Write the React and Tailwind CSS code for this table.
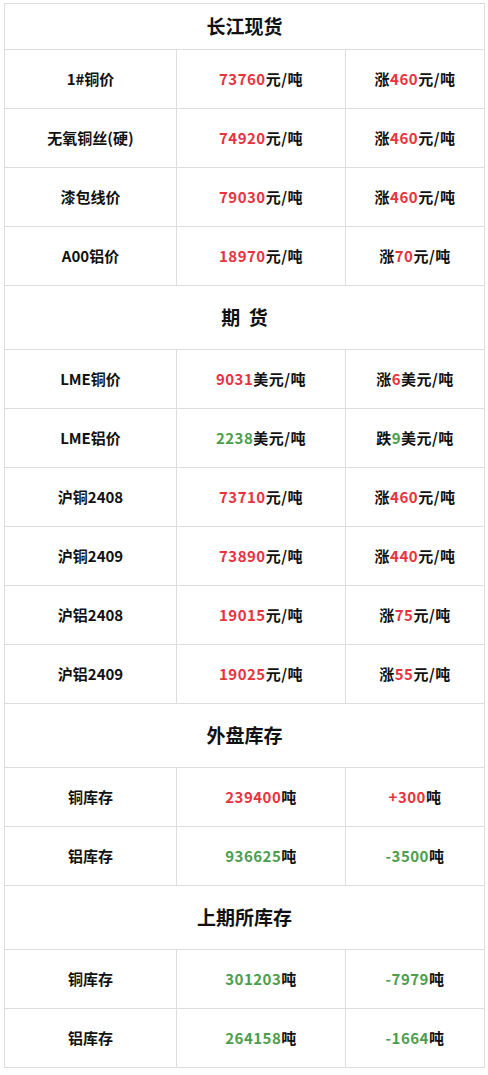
import React from 'react';

const RED = 'text-[#e8333f]';
const GREEN = 'text-[#4a9e4c]';

const sections = [
  {
    title: '长江现货',
    first: true,
    rows: [
      { name: '1#铜价', price: '73760', unit: '元/吨', dir: '涨', change: '460', color: 'red' },
      { name: '无氧铜丝(硬)', price: '74920', unit: '元/吨', dir: '涨', change: '460', color: 'red' },
      { name: '漆包线价', price: '79030', unit: '元/吨', dir: '涨', change: '460', color: 'red' },
      { name: 'A00铝价', price: '18970', unit: '元/吨', dir: '涨', change: '70', color: 'red' },
    ],
  },
  {
    title: '期\u00a0\u00a0货',
    rows: [
      { name: 'LME铜价', price: '9031', unit: '美元/吨', dir: '涨', change: '6', color: 'red' },
      { name: 'LME铝价', price: '2238', unit: '美元/吨', dir: '跌', change: '9', color: 'green' },
      { name: '沪铜2408', price: '73710', unit: '元/吨', dir: '涨', change: '460', color: 'red' },
      { name: '沪铜2409', price: '73890', unit: '元/吨', dir: '涨', change: '440', color: 'red' },
      { name: '沪铝2408', price: '19015', unit: '元/吨', dir: '涨', change: '75', color: 'red' },
      { name: '沪铝2409', price: '19025', unit: '元/吨', dir: '涨', change: '55', color: 'red' },
    ],
  },
  {
    title: '外盘库存',
    rows: [
      { name: '铜库存', price: '239400', unit: '吨', dir: '', change: '+300', color: 'red' },
      { name: '铝库存', price: '936625', unit: '吨', dir: '', change: '-3500', color: 'green' },
    ],
  },
  {
    title: '上期所库存',
    rows: [
      { name: '铜库存', price: '301203', unit: '吨', dir: '', change: '-7979', color: 'green' },
      { name: '铝库存', price: '264158', unit: '吨', dir: '', change: '-1664', color: 'green' },
    ],
  },
];

const cell = 'border border-[#dddddd] text-center align-middle';

const App = () => {
  return (
    <div
      className="bg-white pl-[4px] pt-[3px] pb-[6px] text-[#111111]"
      style={{ fontFamily: '"Noto Sans CJK SC", "Noto Sans", sans-serif' }}
    >
      <table className="w-[480px] border-collapse table-fixed">
        <colgroup>
          <col className="w-[172px]" />
          <col className="w-[169px]" />
          <col className="w-[139px]" />
        </colgroup>
        <tbody>
          {sections.map((sec) => (
            <React.Fragment key={sec.title}>
              <tr className={sec.first ? 'h-[46px]' : 'h-[64px]'}>
                <td colSpan={3} className={`${cell} text-[19px] font-bold`}>
                  {sec.title}
                </td>
              </tr>
              {sec.rows.map((r, i) => {
                const c = r.color === 'red' ? RED : GREEN;
                return (
                  <tr key={i} className="h-[59px] text-[15px] font-bold">
                    <td className={cell}>{r.name}</td>
                    <td className={`${cell} tracking-[0.5px]`}>
                      <span className={c}>{r.price}</span>
                      {r.unit}
                    </td>
                    <td className={`${cell} tracking-[0.5px]`}>
                      {r.dir}
                      <span className={c}>{r.change}</span>
                      {r.unit}
                    </td>
                  </tr>
                );
              })}
            </React.Fragment>
          ))}
        </tbody>
      </table>
    </div>
  );
};

export default App;
